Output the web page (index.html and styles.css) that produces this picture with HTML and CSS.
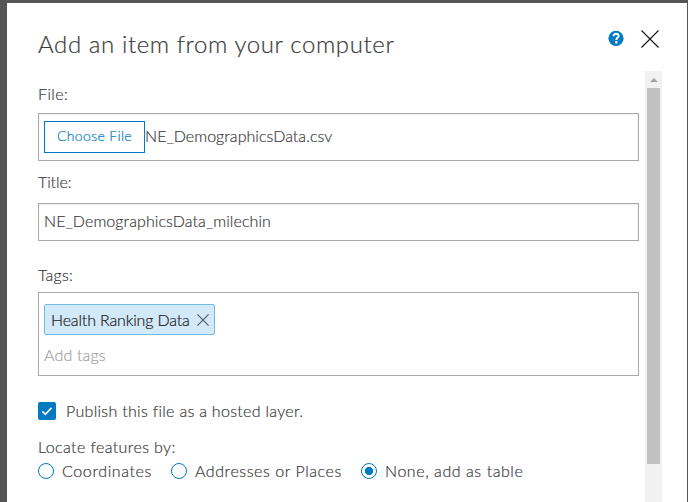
FILE: index.html
```html
<!DOCTYPE html>
<html lang="en">
<head>
<meta charset="utf-8">
<title>Add an item from your computer</title>
<link rel="stylesheet" href="styles.css">
</head>
<body>
<main class="dialog">
  <header class="header">
    <h1 class="heading">Add an item from your computer</h1>
    <svg class="help" viewBox="0 0 16 16" aria-label="Help"><circle cx="8" cy="8.300" r="7.6" fill="#007ac2"/><path d="M5.500 6.200C5.500 4.600 6.600 3.800 8.100 3.800s2.500.8 2.500 2.100C10.600 7.700 8.300 7.600 8.300 9.900" fill="none" stroke="#fff" stroke-width="2"/><rect x="7.200" y="11.200" width="2.200" height="2.200" fill="#fff"/></svg>
    <svg class="close" viewBox="0 0 18 18" aria-label="Close"><path d="M.5.5l17 17M17.500.5l-17 17" stroke="#151515" stroke-width="1.100"/></svg>
  </header>
  <div class="body">
    <form class="form">
      <div class="label label-file"><span class="t-file">File:</span></div>
      <div class="field file-field"><button type="button" class="choose">Choose File</button><span class="filename">NE_DemographicsData.csv</span></div>
      <div class="label label-title"><span class="t-title">Title:</span></div>
      <div class="field title-field"><span class="t-value">NE_DemographicsData_milechin</span></div>
      <div class="label label-tags"><span class="t-tags">Tags:</span></div>
      <div class="field tags-field">
        <div class="tag"><span class="t-tag">Health Ranking Data</span><svg class="remove" viewBox="0 0 12 12"><path d="M.4.4l11.200 11.200M11.600.4L.4 11.600" stroke="#4c5a63" stroke-width="1.100"/></svg></div>
        <div class="placeholder">Add tags</div>
      </div>
      <div class="publish"><span class="checkbox"><svg viewBox="0 0 18 18"><path d="M4.300 9.300l3 3 6.200-6.400" fill="none" stroke="#fff" stroke-width="1.700"/></svg></span><span class="t-publish">Publish this file as a hosted layer.</span></div>
      <div class="locate"><span class="t-locate">Locate features by:</span></div>
      <div class="options">
        <span class="option option-coord"><i class="radio"></i><span class="t-coord">Coordinates</span></span>
        <span class="option option-addr"><i class="radio"></i><span class="t-addr">Addresses or Places</span></span>
        <span class="option"><i class="radio checked"></i><span class="t-none">None, add as table</span></span>
      </div>
    </form>
    <div class="scrollbar"><span class="up"></span><span class="thumb"></span></div>
  </div>
</main>
</body>
</html>
```
FILE: styles.css
```css
* { box-sizing: border-box; }
body {
  margin: 0;
  height: 502px;
  overflow: hidden;
  padding: 3px 1px 0 7px;
  background: #555;
  color: #3c3c3c;
  font: 300 16px/24px Lato, sans-serif;
  letter-spacing: .4px;
  white-space: nowrap;
  -webkit-text-stroke: .2px currentColor;
}
.dialog { height: 499px; padding: 0 25px 0 31px; background: #fff; }
.header { display: flex; height: 68px; }
.heading { width: 570px; margin: 25px 0 0; font-size: 24px; line-height: 32px; font-weight: 300; letter-spacing: .6px; }
.help { width: 16px; height: 16px; margin-top: 27px; flex: none; }
.close { width: 18px; height: 18px; margin: 27px 0 0 17px; flex: none; }
.body { display: flex; justify-content: space-between; height: 431px; }
.form { width: 601px; margin: 0; }
.label { height: 24px; }
.label-file { margin: 11px 0 7px; }
.label-title { margin: 9px 0 9px; letter-spacing: -.1px; }
.label-tags { margin: 22px 0 5px; letter-spacing: .2px; }
.field { border: 1px solid #a9a9a9; padding: 0 5px; }
.file-field { display: flex; align-items: center; height: 48px; box-shadow: inset 0 1px 2px #eee; }
.filename { margin-bottom: 2px; letter-spacing: .05px; }
.choose { width: 101px; height: 32px; padding: 0 0 3px; border: 1px solid #007ac2; background: #fff; color: #007ac2; font: 300 14px/20px Lato, sans-serif; letter-spacing: .35px; -webkit-text-stroke: .2px currentColor; }
.title-field { height: 38px; padding-top: 5px; box-shadow: inset 0 1px 2px #eee; }
.t-value { letter-spacing: .09px; }
.tags-field { height: 84px; padding-top: 11px; }
.tag { display: flex; align-items: center; justify-content: space-between; width: 171px; height: 31px; padding: 1px 5px 0 6px; border: 1px solid #77b9df; border-radius: 2px; background: #d2e9f9; color: #202020; }
.t-tag { letter-spacing: -.15px; }
.remove { width: 12px; height: 12px; margin-bottom: 1px; }
.placeholder { margin-top: 8px; color: #a0a0a0; letter-spacing: .15px; }
.publish { display: flex; align-items: center; height: 24px; margin-top: 23px; }
.checkbox { width: 18px; height: 18px; margin: 0 10px 0 0; border-radius: 2px; background: #007ac2; }
.checkbox svg { display: block; }
.t-publish { letter-spacing: .3px; }
.locate { height: 24px; margin-top: 12px; }
.options { display: flex; height: 24px; letter-spacing: .56px; }
.option { display: flex; align-items: center; }
.option-coord { width: 133px; letter-spacing: .62px; }
.option-addr { width: 190px; }
.radio { width: 16px; height: 16px; margin-right: 8px; border: 1px solid #007ac2; border-radius: 50%; background: #fff; }
.radio.checked { background: radial-gradient(circle, #007ac2 3.800px, #fff 4.400px); }
.scrollbar { width: 17px; height: 431px; background: #f1f1f1; }
.up { display: block; width: 0; height: 17px; margin: 0 auto; position: relative; }
.up::before { content: ""; position: absolute; left: -4px; top: 7px; border: 4px solid transparent; border-top: 0; border-bottom: 4px solid #a3a3a3; }
.thumb { display: block; width: 13px; height: 376px; margin: 0 2px; background: #c1c1c1; }
```
